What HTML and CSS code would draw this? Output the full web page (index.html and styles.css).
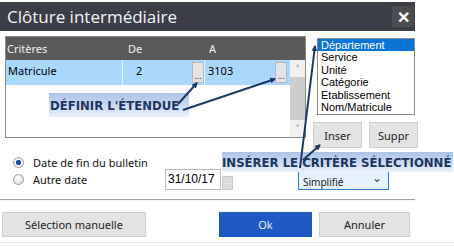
FILE: index.html
```html
<!DOCTYPE html>
<html lang="fr">
<head>
<meta charset="utf-8">
<link rel="stylesheet" href="styles.css">
</head>
<body>
<div class="page">
  <div class="dialog">
    <div class="titlebar">
      <span class="title">Clôture intermédiaire</span>
      <span class="close">✕</span>
    </div>
    <div class="main">
      <div class="grid">
        <div class="ghead">
          <span class="gh c1">Critères</span>
          <span class="gh c2">De</span>
          <span class="gh c3">A</span>
          <span class="gh c4"></span>
        </div>
        <div class="gbody">
          <div class="rows">
            <div class="row">
              <span class="cell c1">Matricule</span>
              <span class="cell c2"><span class="val center">2</span><span class="dots">...</span></span>
              <span class="cell c3"><span class="val">3103</span><span class="dots">...</span></span>
            </div>
          </div>
          <div class="scroll">
            <span class="sarrow">&#708;</span>
            <span class="thumb"></span>
            <span class="sarrow">&#709;</span>
          </div>
        </div>
      </div>
      <div class="side">
        <ul class="list">
          <li class="sel">Département</li>
          <li>Service</li>
          <li>Unité</li>
          <li>Catégorie</li>
          <li>Etablissement</li>
          <li>Nom/Matricule</li>
        </ul>
        <div class="sidebtns">
          <span class="btn small">Inser</span>
          <span class="btn small">Suppr</span>
        </div>
      </div>
    </div>
    <div class="options">
      <div class="radios">
        <label class="radio"><span class="dot on"></span>Date de fin du bulletin</label>
        <label class="radio"><span class="dot"></span>Autre date</label>
      </div>
      <div class="datefield">
        <span class="date">31/10/17</span>
        <span class="datebtn">...</span>
      </div>
      <div class="select">Simplifié<span class="chev">&#8964;</span></div>
    </div>
    <div class="sep"></div>
    <div class="footer">
      <span class="btn big">Sélection manuelle</span>
      <span class="btn ok">Ok</span>
      <span class="btn cancel">Annuler</span>
    </div>
  </div>
  <div class="pinkline"></div>

  <div class="note note1">DÉFINIR L'ÉTENDUE</div>
  <div class="note note2">INSÉRER LE CRITÈRE SÉLECTIONNÉ</div>
  <svg class="arrows" width="454" height="247" viewBox="0 0 454 247">
    <defs>
      <marker id="ah" markerWidth="6" markerHeight="6" refX="5" refY="3" orient="auto" markerUnits="userSpaceOnUse">
        <path d="M0,0 L6,3 L0,6 Z" fill="#1d3867"/>
      </marker>
    </defs>
    <line x1="178" y1="104" x2="197" y2="83" stroke="#1d3867" stroke-width="2" marker-end="url(#ah)"/>
    <line x1="183" y1="110" x2="275" y2="79" stroke="#1d3867" stroke-width="2" marker-end="url(#ah)"/>
    <line x1="300" y1="168" x2="315" y2="46" stroke="#1d3867" stroke-width="2" marker-end="url(#ah)"/>
    <line x1="303" y1="160" x2="320" y2="145" stroke="#1d3867" stroke-width="2" marker-end="url(#ah)"/>
  </svg>
</div>
</body>
</html>
```

FILE: styles.css
```css
* { box-sizing: border-box; }
html, body { margin: 0; padding: 0; background: #fff; }
body { font-family: "Noto Sans", "Open Sans", sans-serif; font-size: 11px; color: #000; }
.page { position: relative; width: 454px; height: 247px; overflow: hidden; }
.dialog { width: 415px; padding-top: 2px; }

.titlebar {
  height: 29px; background: #3b3e47; display: flex; align-items: center;
  justify-content: space-between; padding-left: 7px; padding-right: 1px;
}
.title { color: #f4f4f4; font-size: 17px; font-family: "Open Sans", "Noto Sans", sans-serif; letter-spacing: 0; }
.close {
  width: 22px; height: 21px; background: #4b4c50; color: #fff; font-size: 16px;
  font-weight: bold; display: flex; align-items: center; justify-content: center;
}

.main { display: flex; padding: 5px 0 0 5px; height: 122px; }
.grid { width: 301px; height: 102px; border: 1px solid #8a8a8a; display: flex; flex-direction: column; }
.ghead { height: 23px; background: #5a5a5a; display: flex; align-items: center; }
.gh { color: #f0f0f0; font-size: 11px; padding-left: 1px; }
.c1 { width: 117px; }
.c2 { width: 82px; }
.c3 { width: 85px; }
.c4 { width: 15px; }
.ghead .c2 { padding-left: 5px; }
.ghead .c3 { padding-left: 4px; }
.gbody { flex: 1; display: flex; }
.rows { flex: 1; background: #fff; }
.row { display: flex; height: 25px; background: #a8d8fd; }
.cell { display: flex; align-items: flex-start; padding-top: 3px; height: 25px; }
.row .c1 { padding-left: 2px; border-right: 1px solid #e6f2fb; }
.row .c2 { border-right: 1px solid #e6f2fb; }
.val { flex: 1; padding-left: 3px; }
.val.center { padding-left: 13px; }
.dots {
  width: 12px; height: 21px; margin-top: -1px; background: #e4e4e4; border: 1px solid #b8b8b8;
  font-size: 9px; line-height: 26px; text-align: center; color: #333;
}
.row .c3 .dots { margin-right: 3px; }
.scroll { width: 15px; background: #e9e9e9; display: flex; flex-direction: column; }
.sarrow { height: 17px; background: #f0f0f0; color: #555; font-size: 11px; text-align: center; line-height: 17px; }
.thumb { flex: 1; background: #cdcdcd; }

.side { margin-left: 11px; padding-top: 2px; }
.list {
  list-style: none; margin: 0; padding: 0; width: 98px; height: 77px; border: 1px solid #8a8a8a;
  font-family: "Liberation Sans", Arial, sans-serif; font-size: 11px; line-height: 12.4px;
}
.list li { padding-left: 3px; }
.list li.sel { background: #0a74d6; color: #fff; }
.sidebtns { display: flex; gap: 7px; margin-top: 7px; margin-left: -4px; }
.btn {
  display: flex; align-items: center; justify-content: center; background: #e3e3e3;
  border: 1px solid #cfcfcf; color: #222; font-size: 11px;
}
.small { width: 49px; height: 26px; }

.options { display: flex; height: 42px; padding-top: 3px; }
.radios { padding-left: 13px; display: flex; flex-direction: column; gap: 4px; width: 165px; }
.radio { display: flex; align-items: center; gap: 9px; height: 13px; color: #111; }
.dot {
  width: 11px; height: 11px; border-radius: 50%; border: 1px solid #9a9a9a;
  background: radial-gradient(circle at 40% 35%, #fff, #d8d8d8);
}
.dot.on { background: radial-gradient(circle, #1b4fa8 0 2.5px, #fff 3px, #dcdcdc); }
.datefield { display: flex; align-items: flex-end; margin-top: 13px; height: 21px; }
.date {
  width: 56px; height: 21px; border: 1px solid #b8b8b8; font-family: "Liberation Sans", Arial, sans-serif;
  font-size: 12px; padding: 2px 0 0 2px; background: #fff;
}
.datebtn {
  width: 11px; height: 14px; background: #dcdcdc; border: 1px solid #c8c8c8; margin-left: 1px;
  font-size: 8px; color: #fff; text-align: center; line-height: 8px;
}
.select {
  margin-left: 65px; margin-top: 9px; width: 91px; height: 25px; background: #e5f1fb; border: 1px solid #2d7fd4;
  display: flex; justify-content: space-between; padding: 9px 6px 0 4px; font-size: 10px; color: #222;
}
.chev { font-size: 12px; line-height: 6px; color: #444; }

.sep { height: 2px; border-top: 1px solid #a0a0a0; border-bottom: 1px solid #f7f7f7; margin-top: 4px; }
.footer { display: flex; margin-top: 11px; height: 25px; padding-left: 2px; }
.big { width: 144px; height: 25px; }
.ok { margin-left: 73px; width: 93px; height: 25px; background: #1f5ac4; border-color: #1f5ac4; color: #e6ecf7; }
.cancel { margin-left: 7px; width: 91px; height: 25px; }
.pinkline { position: absolute; left: 0; top: 242px; width: 454px; height: 1px; background: #f0dde2; }

.note {
  position: absolute; color: #1c355f; font-weight: bold; white-space: nowrap;
  font-family: "DejaVu Sans Condensed", "DejaVu Sans", sans-serif; font-size: 13px;
  background: linear-gradient(#a9c3e7, #e9f0fa);
  display: flex; align-items: center;
}
.note1 { left: 49px; top: 93px; width: 140px; height: 24px; padding-left: 1px; }
.note2 { left: 222px; top: 152px; width: 231px; height: 20px; padding-left: 0; }
.arrows { position: absolute; left: 0; top: 0; }
```
